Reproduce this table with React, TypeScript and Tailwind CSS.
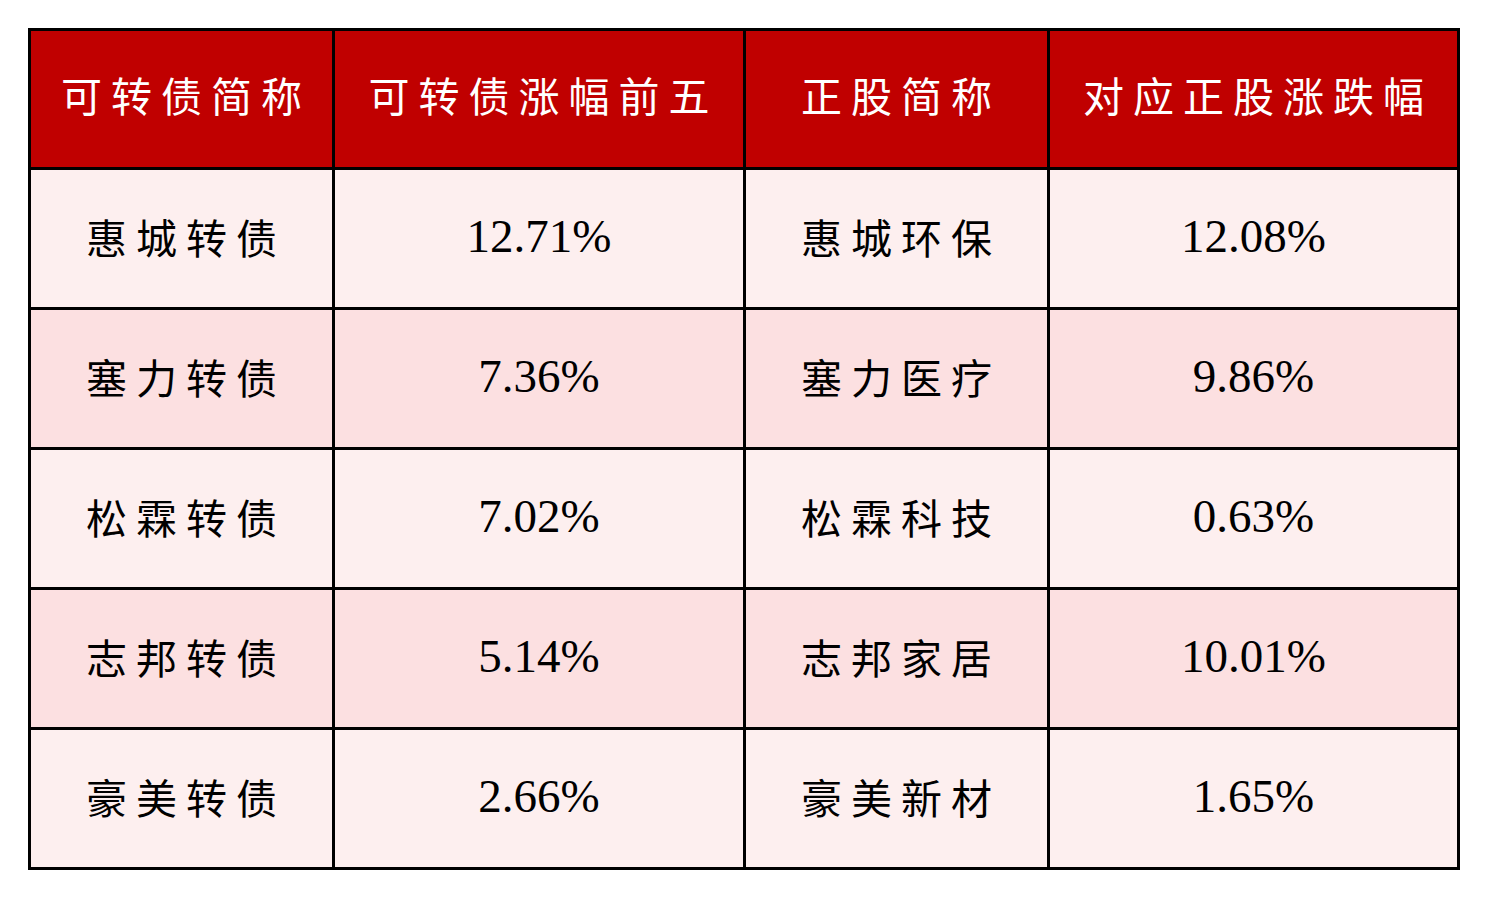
import React from "react";

const rows = [
  ["惠城转债", "12.71%", "惠城环保", "12.08%"],
  ["塞力转债", "7.36%", "塞力医疗", "9.86%"],
  ["松霖转债", "7.02%", "松霖科技", "0.63%"],
  ["志邦转债", "5.14%", "志邦家居", "10.01%"],
  ["豪美转债", "2.66%", "豪美新材", "1.65%"],
];

const headers = ["可转债简称", "可转债涨幅前五", "正股简称", "对应正股涨跌幅"];

const cjk = "font-['Noto_Sans_CJK_SC',sans-serif] text-[41px] tracking-[9px] font-normal pl-[9px]";
const num = "font-['Liberation_Serif','Noto_Sans_CJK_SC',serif] text-[47px] pb-[4px]";

export default function App() {
  return (
    <div className="w-[1488px] h-[899px] bg-white pt-[28px] pl-[28px]">
      <div className="grid grid-cols-[301px_408px_301px_407px] grid-rows-[136px_137px_137px_137px_137px_137px] gap-[3px] p-[3px] bg-black w-[1432px]">
        {headers.map((h) => (
          <div key={h} className={`bg-[#c00000] text-white flex items-center justify-center pb-[8px] ${cjk}`}>
            {h}
          </div>
        ))}
        {rows.map((r, i) => {
          const bg = i % 2 === 0 ? "bg-[#fdefef]" : "bg-[#fce0e1]";
          return r.map((c, j) => (
            <div
              key={`${i}-${j}`}
              className={`${bg} text-black flex items-center justify-center ${j % 2 === 0 ? cjk + " pb-[4px]" : num}`}
            >
              {c}
            </div>
          ));
        })}
      </div>
    </div>
  );
}
